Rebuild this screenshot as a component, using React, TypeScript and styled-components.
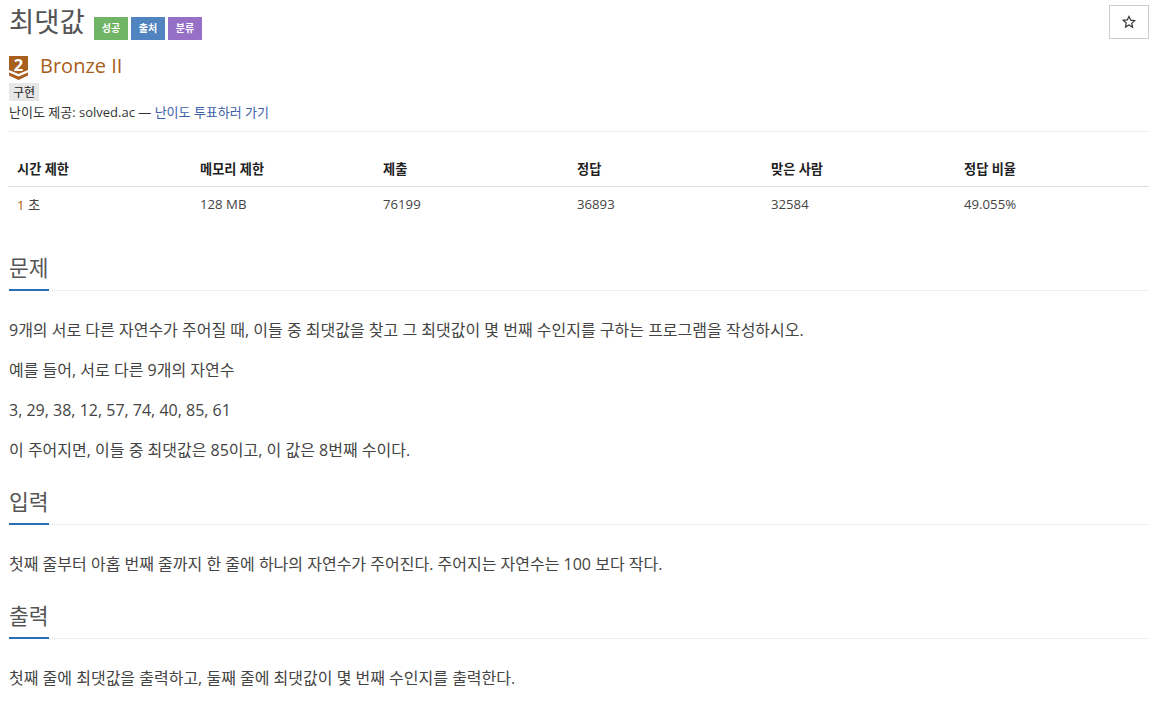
import styled, { createGlobalStyle } from "styled-components";

const GlobalStyle = createGlobalStyle`
  html, body {
    margin: 0;
    background: #fff;
  }
  body {
    font-family: "Open Sans", "Noto Sans CJK KR", sans-serif;
    font-size: 13px;
    color: #333;
  }
`;

const Page = styled.div`
  padding: 0 2px 0 9px;
`;

const TitleRow = styled.div`
  display: flex;
  align-items: flex-start;
  justify-content: space-between;
  height: 52px;
  padding-top: 4px;
  box-sizing: border-box;
`;

const TitleLeft = styled.div`
  display: flex;
  align-items: flex-start;
`;

const Title = styled.h1`
  margin: 0 9px 0 0;
  font-size: 27.5px;
  font-weight: 400;
  line-height: 36px;
  color: #555;
`;

const Labels = styled.div`
  display: flex;
  gap: 3px;
  margin-top: 13px;
`;

const Label = styled.span<{ $bg: string }>`
  display: block;
  width: 34px;
  height: 23px;
  line-height: 23px;
  text-align: center;
  background: ${({ $bg }) => $bg};
  color: #fff;
  font-size: 10px;
  font-weight: 700;
`;

const StarButton = styled.button`
  width: 40px;
  height: 34px;
  margin: 1px 0 0;
  padding: 0;
  background: #fff;
  border: 1px solid #ccc;
  display: flex;
  align-items: center;
  justify-content: center;
  color: #333;
`;

const TierRow = styled.div`
  display: flex;
  align-items: center;
  height: 27px;
`;

const TierIcon = styled.svg`
  display: block;
  margin-top: 5px;
  overflow: visible;
`;

const TierName = styled.span`
  margin-left: 12px;
  font-size: 20px;
  color: #a85e1c;
`;

const TagRow = styled.div`
  height: 22px;
  padding-top: 4px;
  box-sizing: border-box;
`;

const Tag = styled.span`
  display: block;
  width: 30px;
  height: 18px;
  line-height: 19px;
  text-align: center;
  background: #e7e7e7;
  color: #222;
  font-size: 12px;
`;

const Credit = styled.div`
  height: 21px;
  padding-top: 1px;
  line-height: 20px;
  font-size: 13px;
  padding-bottom: 8px;
  margin-bottom: 19px;
  border-bottom: 1px solid #eee;
`;

const VoteLink = styled.a`
  color: #3c5ea8;
  text-decoration: none;
`;

const InfoTable = styled.table`
  width: 1141px;
  margin-left: -1px;
  border-collapse: collapse;
  table-layout: fixed;
  font-size: 13.2px;
`;

const HeadCell = styled.th<{ $w: number }>`
  width: ${({ $w }) => $w}px;
  height: 35px;
  padding: 0 8px 0 9px;
  box-sizing: border-box;
  text-align: left;
  font-weight: 700;
  color: #222;
  border-bottom: 1px solid #ddd;
`;

const BodyCell = styled.td`
  height: 36px;
  box-sizing: border-box;
  padding: 0 8px 0 9px;
  color: #444;
`;

const Limit = styled.span`
  color: #ad5600;
`;

const Section = styled.section<{ $first?: boolean }>`
  margin-top: ${({ $first }) => ($first ? 30 : 26)}px;
`;

const Heading = styled.h2`
  margin: 0;
  height: 38px;
  font-weight: 400;
  border-bottom: 1px dotted #e2e2e2;
`;

const HeadingText = styled.span`
  display: inline-block;
  width: 40px;
  height: 37px;
  line-height: 32px;
  font-size: 21.5px;
  white-space: nowrap;
  color: #555;
  border-bottom: 2px solid #2a6fb5;
`;

const Body = styled.div`
  padding-top: 29px;
`;

const Para = styled.p`
  margin: 0 0 20px;
  height: 20px;
  line-height: 20px;
  font-size: 16px;
  color: #444;
`;

const TIER_BROWN = "#a85e1c";

const TierBadge = () => (
  <TierIcon width="19" height="24" viewBox="0 0 19 24">
    <path d="M0 0H19V14L9.5 18L0 14Z" fill={TIER_BROWN} />
    <path d="M0 16.5L9.5 20.5L19 16.5V19.5L9.5 24L0 19.5Z" fill={TIER_BROWN} />
    <text
      x="9.5"
      y="15"
      textAnchor="middle"
      fontSize="16.5"
      fontWeight="700"
      fontFamily="'Open Sans', sans-serif"
      fill="#fff"
    >
      2
    </text>
  </TierIcon>
);

const StarIcon = () => (
  <svg width="14" height="14" viewBox="0 0 24 24" fill="none" stroke="currentColor" strokeWidth="2">
    <path d="M12 2.5l2.9 6.3 6.9.8-5.1 4.7 1.4 6.8L12 17.1l-6.1 3.5 1.4-6.8-5.1-4.7 6.9-.8z" />
  </svg>
);

const columns = [
  { head: "시간 제한", width: 183 },
  { head: "메모리 제한", width: 183 },
  { head: "제출", width: 194 },
  { head: "정답", width: 194 },
  { head: "맞은 사람", width: 193 },
  { head: "정답 비율", width: 194 },
];

export default function App() {
  return (
    <>
      <GlobalStyle />
      <Page>
        <TitleRow>
          <TitleLeft>
            <Title>최댓값</Title>
            <Labels>
              <Label $bg="#70b566">성공</Label>
              <Label $bg="#5084c1">출처</Label>
              <Label $bg="#966fc6">분류</Label>
            </Labels>
          </TitleLeft>
          <StarButton>
            <StarIcon />
          </StarButton>
        </TitleRow>
        <TierRow>
          <TierBadge />
          <TierName>Bronze II</TierName>
        </TierRow>
        <TagRow>
          <Tag>구현</Tag>
        </TagRow>
        <Credit>
          난이도 제공: solved.ac — <VoteLink href="#">난이도 투표하러 가기</VoteLink>
        </Credit>
        <InfoTable>
          <thead>
            <tr>
              {columns.map((c) => (
                <HeadCell key={c.head} $w={c.width}>
                  {c.head}
                </HeadCell>
              ))}
            </tr>
          </thead>
          <tbody>
            <tr>
              <BodyCell>
                <Limit>1</Limit> 초
              </BodyCell>
              <BodyCell>128 MB</BodyCell>
              <BodyCell>76199</BodyCell>
              <BodyCell>36893</BodyCell>
              <BodyCell>32584</BodyCell>
              <BodyCell>49.055%</BodyCell>
            </tr>
          </tbody>
        </InfoTable>
        <Section $first>
          <Heading>
            <HeadingText>문제</HeadingText>
          </Heading>
          <Body>
            <Para>9개의 서로 다른 자연수가 주어질 때, 이들 중 최댓값을 찾고 그 최댓값이 몇 번째 수인지를 구하는 프로그램을 작성하시오.</Para>
            <Para>예를 들어, 서로 다른 9개의 자연수</Para>
            <Para>3, 29, 38, 12, 57, 74, 40, 85, 61</Para>
            <Para>이 주어지면, 이들 중 최댓값은 85이고, 이 값은 8번째 수이다.</Para>
          </Body>
        </Section>
        <Section>
          <Heading>
            <HeadingText>입력</HeadingText>
          </Heading>
          <Body>
            <Para>첫째 줄부터 아홉 번째 줄까지 한 줄에 하나의 자연수가 주어진다. 주어지는 자연수는 100 보다 작다.</Para>
          </Body>
        </Section>
        <Section>
          <Heading>
            <HeadingText>출력</HeadingText>
          </Heading>
          <Body>
            <Para>첫째 줄에 최댓값을 출력하고, 둘째 줄에 최댓값이 몇 번째 수인지를 출력한다.</Para>
          </Body>
        </Section>
      </Page>
    </>
  );
}
